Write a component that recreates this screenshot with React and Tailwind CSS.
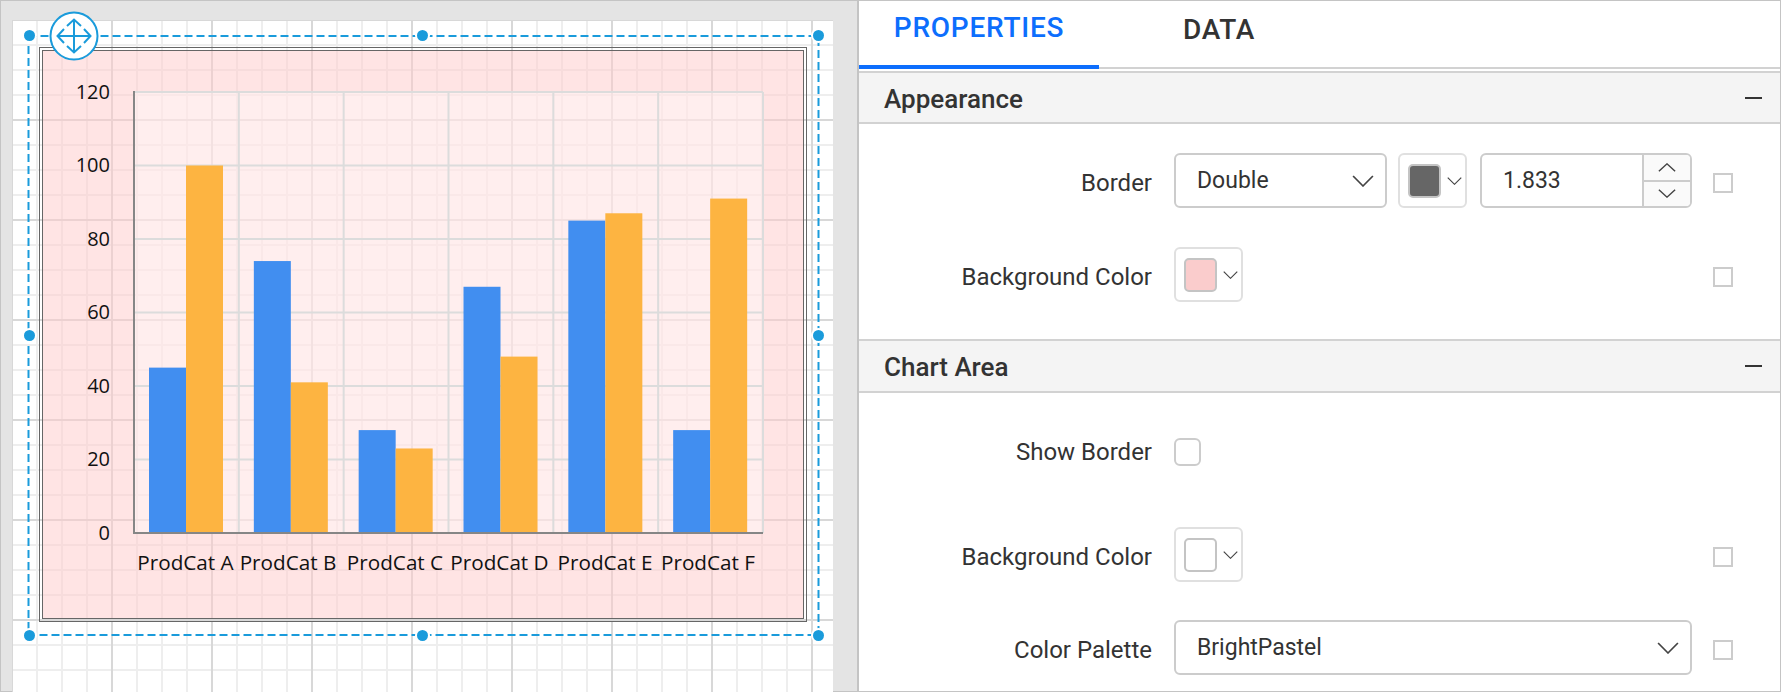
import React from "react";

const BLUE = "#1a9bdb";

const categories = [
  { name: "ProdCat A", blue: 45, orange: 100, labelX: 185.5 },
  { name: "ProdCat B", blue: 74, orange: 41, labelX: 288 },
  { name: "ProdCat C", blue: 28, orange: 23, labelX: 395 },
  { name: "ProdCat D", blue: 67, orange: 48, labelX: 499.5 },
  { name: "ProdCat E", blue: 85, orange: 87, labelX: 605 },
  { name: "ProdCat F", blue: 28, orange: 91, labelX: 708 },
];

const PLOT = { left: 134, top: 92, right: 763, bottom: 533 };
const catW = (PLOT.right - PLOT.left) / 6;
const unit = (PLOT.bottom - PLOT.top) / 120;

// chart drawn in page coordinates, the viewBox is the inside of the double border
const Chart = () => (
  <svg className="block h-[567px] w-[760px]" viewBox="43 51 760 567">
    <rect x={PLOT.left} y={PLOT.top} width={PLOT.right - PLOT.left} height={PLOT.bottom - PLOT.top} fill="#fff" fillOpacity="0.36" />
    {[1, 2, 3, 4, 5, 6].map((i) => (
      <line key={i} x1={PLOT.left + catW * i} x2={PLOT.left + catW * i} y1={PLOT.top} y2={PLOT.bottom} stroke="#dcdcdc" strokeWidth="2" />
    ))}
    {[0, 1, 2, 3, 4, 5].map((i) => (
      <line key={i} x1={PLOT.left} x2={PLOT.right} y1={PLOT.top + i * 20 * unit} y2={PLOT.top + i * 20 * unit} stroke="#dcdcdc" strokeWidth="2" />
    ))}
    {categories.map((c, i) => {
      const x = PLOT.left + catW * i + 15;
      return (
        <g key={c.name}>
          <rect x={x} y={PLOT.bottom - c.blue * unit} width="37" height={c.blue * unit} fill="#418ef0" />
          <rect x={x + 37} y={PLOT.bottom - c.orange * unit} width="37" height={c.orange * unit} fill="#fdb441" />
          <text x={c.labelX} y="570" textAnchor="middle" fontSize="20.7" fill="#111" fontFamily="'Open Sans', sans-serif">
            {c.name}
          </text>
        </g>
      );
    })}
    <path d={`M${PLOT.left} ${PLOT.top - 1}V${PLOT.bottom}H${PLOT.right}`} fill="none" stroke="#868686" strokeWidth="2" />
    {[120, 100, 80, 60, 40, 20, 0].map((v) => (
      <text key={v} x="110" y={PLOT.bottom - v * unit + 6.8} textAnchor="end" fontSize="20" fill="#111" fontFamily="'Open Sans', sans-serif">
        {v}
      </text>
    ))}
  </svg>
);

const Handle = ({ className }) => (
  <div className={`absolute h-[11px] w-[11px] rounded-full bg-[#1a9bdb] shadow-[0_0_0_2px_#ffffff] ${className}`} />
);

const MoveButton = () => (
  <svg className="absolute left-[37px] top-[-9px] h-[50px] w-[50px]" viewBox="0 0 50 50" fill="none" stroke={BLUE} strokeWidth="2">
    <circle cx="25" cy="25" r="23.5" fill="#fff" />
    <path d="M9 25H41M25 9V41" />
    <path d="M15 18L8.5 25L15 32M35 18L41.5 25L35 32M18 15L25 8.5L32 15M18 35L25 41.5L32 35" />
  </svg>
);

const Chevron = ({ className, up }) => (
  <svg className={className} viewBox="0 0 20 12" fill="none" stroke="#444" strokeWidth="1.5" preserveAspectRatio="none">
    <path d={up ? "M1 11L10 1L19 11" : "M1 1L10 11L19 1"} />
  </svg>
);

const TinyCheck = () => <div className="mt-1 h-[20px] w-[20px] flex-none border-2 border-[#cccccc] bg-white" />;

const SelectBox = ({ value, className }) => (
  <div className={`flex h-[55px] items-center justify-between rounded-md border-2 border-[#cccccc] bg-white pl-[21px] pr-[11px] text-[23px] ${className}`}>
    <span className="pt-[2px]">{value}</span>
    <Chevron className="h-[12px] w-[22px]" />
  </div>
);

const ColorPicker = ({ swatch }) => (
  <div className="flex h-[55px] w-[69px] flex-none items-center rounded-md border-2 border-[#e0e0e0] bg-white pl-[8px]">
    <div className={`h-[34px] w-[33px] rounded-[5px] border-2 border-[#c4c4c4] ${swatch}`} />
    <Chevron className="ml-[6px] h-[8px] w-[15px]" />
  </div>
);

const NumberBox = () => (
  <div className="flex h-[55px] w-[212px] flex-none overflow-hidden rounded-md border-2 border-[#cccccc] bg-white text-[23px]">
    <div className="flex flex-1 items-center pl-[21px] pt-[2px]">1.833</div>
    <div className="flex w-[48px] flex-col border-l-2 border-[#cccccc] bg-[#fafafa]">
      <div className="flex flex-1 items-center justify-center border-b-2 border-[#cccccc]">
        <Chevron up className="h-[9px] w-[18px]" />
      </div>
      <div className="flex flex-1 items-center justify-center">
        <Chevron className="h-[9px] w-[18px]" />
      </div>
    </div>
  </div>
);

const Row = ({ label, children, check = true, className = "", labelClass = "pt-[5px]" }) => (
  <div className={`flex items-center ${className}`}>
    <div className={`w-[293px] flex-none text-right text-[24px] leading-[28px] text-[#333333] ${labelClass}`}>{label}</div>
    <div className="ml-[22px] flex w-[518px] flex-none items-center">{children}</div>
    {check && <div className="ml-[21px]"><TinyCheck /></div>}
  </div>
);

const SectionHeader = ({ title, className = "" }) => (
  <div className={`flex flex-none items-center justify-between border-b-2 border-t-2 border-[#d2d2d2] bg-[#f4f4f4] pl-[25px] pr-[18px] ${className}`}>
    <span className="pt-[2px] text-[26px] font-medium leading-none text-[#333333]">{title}</span>
    <div className="h-[2px] w-[17px] bg-[#333333]" />
  </div>
);

const App = () => {
  return (
    <div className="flex h-[692px] w-[1781px] overflow-hidden bg-white font-['Roboto',sans-serif] text-[#333333]">
      <div className="h-full w-[859px] flex-none border-b-[1px] border-l-[1px] border-r-2 border-t-[1px] border-[#c4c4c4] bg-[#e4e4e4] pl-[11px] pt-[19px]">
        <div className="relative h-[672px] w-[821px] bg-white [background-image:linear-gradient(to_right,#d8d8d8_2px,transparent_2px),linear-gradient(to_bottom,#d8d8d8_2px,transparent_2px),linear-gradient(to_right,#eeeeee_2px,transparent_2px),linear-gradient(to_bottom,#eeeeee_2px,transparent_2px)] [background-size:100px_100px,100px_100px,25px_25px,25px_25px] [background-position:-1px_-1px,0_-1px,24px_0,0_24px]">
          {/* report item */}
          <div className="absolute left-[27px] top-[27px] h-[575px] w-[768px] border-4 border-double border-[#666666] bg-[#ffc9c9]/50 bg-clip-padding">
            <Chart />
          </div>

          {/* selection outline */}
          <svg className="absolute left-0 top-0 h-[672px] w-[821px]" viewBox="0 0 821 672" fill="none">
            <rect x="16.5" y="16" width="790" height="599" stroke={BLUE} strokeWidth="2" strokeDasharray="8 4" />
          </svg>
          <Handle className="left-[12px] top-[10px]" />
          <Handle className="left-[405px] top-[10px]" />
          <Handle className="left-[801px] top-[10px]" />
          <Handle className="left-[12px] top-[310px]" />
          <Handle className="left-[801px] top-[310px]" />
          <Handle className="left-[12px] top-[610px]" />
          <Handle className="left-[405px] top-[610px]" />
          <Handle className="left-[801px] top-[610px]" />
          <MoveButton />
        </div>
      </div>

      <div className="flex h-full flex-1 flex-col border-b-[1px] border-r-[1px] border-t-[1px] border-[#c4c4c4]">
        <div className="flex h-[68px] flex-none border-b-2 border-[#d2d2d2]">
          <div className="flex h-[68px] w-[240px] items-center justify-center border-b-4 border-[#0d6efd] pb-[10px] text-[28px] font-medium tracking-[0.75px] text-[#0d6efd]">
            PROPERTIES
          </div>
          <div className="flex h-[66px] w-[240px] items-center justify-center pb-[8px] text-[28px] font-medium tracking-[0.75px]">
            DATA
          </div>
        </div>

        <SectionHeader title="Appearance" className="mt-[2px] h-[53px]" />
        <div className="flex flex-col gap-[39px] pt-[29px]">
          <Row label="Border">
            <SelectBox value="Double" className="w-[213px] flex-none" />
            <div className="ml-[11px]"><ColorPicker swatch="bg-[#666666]" /></div>
            <div className="ml-[13px]"><NumberBox /></div>
          </Row>
          <Row label="Background Color">
            <ColorPicker swatch="bg-[#facccc]" />
          </Row>
        </div>

        <SectionHeader title="Chart Area" className="mt-[37px] h-[54px]" />
        <div className="flex flex-col pt-[45px]">
          <Row label="Show Border" check={false} labelClass="">
            <div className="h-[28px] w-[27px] rounded-md border-2 border-[#cccccc] bg-white" />
          </Row>
          <Row label="Background Color" className="mt-[61px]">
            <ColorPicker swatch="bg-white" />
          </Row>
          <Row label="Color Palette" className="mt-[38px]">
            <SelectBox value="BrightPastel" className="w-[518px]" />
          </Row>
        </div>
      </div>
    </div>
  );
};

export default App;
